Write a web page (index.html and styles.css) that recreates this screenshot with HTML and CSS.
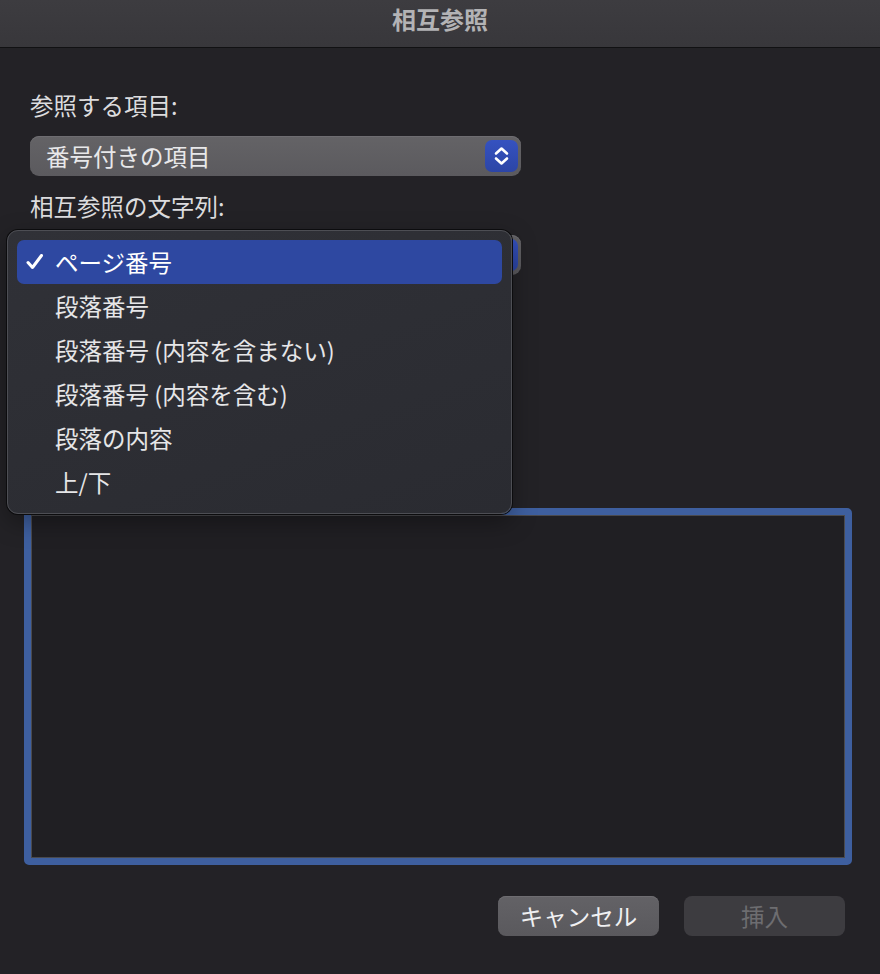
FILE: index.html
```html
<!DOCTYPE html>
<html lang="ja">
<head>
    <meta charset="UTF-8">
    <meta name="viewport" content="width=device-width, initial-scale=1.0">
    <title>相互参照</title>
    <link rel="stylesheet" href="styles.css">
</head>
<body>
    <header class="titlebar">相互参照</header>
    <main class="dialog">
        <p class="label label-first">参照する項目:</p>
        <div class="popup">
            <span class="popup-text">番号付きの項目</span>
            <span class="stepper">
                <svg width="33" height="32" viewBox="0 0 33 32">
                    <path d="M11 13.5 L16.5 8.5 L22 13.5" fill="none" stroke="#fff" stroke-width="2.6" stroke-linecap="round" stroke-linejoin="round"/>
                    <path d="M11 18.5 L16.5 23.5 L22 18.5" fill="none" stroke="#fff" stroke-width="2.6" stroke-linecap="round" stroke-linejoin="round"/>
                </svg>
            </span>
        </div>
        <p class="label label-second">相互参照の文字列:</p>
        <!-- second popup, covered by its open menu -->
        <div class="popup popup-hidden">
            <span class="popup-text"></span>
            <span class="stepper"></span>
        </div>

        <div class="field"></div>

        <div class="buttons">
            <button class="btn btn-cancel">キャンセル</button>
            <button class="btn btn-insert" disabled>挿入</button>
        </div>

        <ul class="menu">
            <li class="menu-item selected">
                <span class="check">
                    <svg width="18" height="16" viewBox="0 0 18 16">
                        <path d="M2 8.5 L6.5 13.5 L15.5 1.5" fill="none" stroke="#fff" stroke-width="3" stroke-linecap="round" stroke-linejoin="round"/>
                    </svg>
                </span>
                <span>ページ番号</span>
            </li>
            <li class="menu-item"><span>段落番号</span></li>
            <li class="menu-item"><span>段落番号&nbsp;(内容を含まない)</span></li>
            <li class="menu-item"><span>段落番号&nbsp;(内容を含む)</span></li>
            <li class="menu-item"><span>段落の内容</span></li>
            <li class="menu-item"><span>上/下</span></li>
        </ul>
    </main>
</body>
</html>
```

FILE: styles.css
```css
* {
    margin: 0;
    padding: 0;
    box-sizing: border-box;
    font-family: "Noto Sans CJK JP", "Noto Sans", sans-serif;
}

body {
    background-color: #232226;
    color: #dedede;
    width: 880px;
    height: 974px;
    overflow: hidden;
}

.titlebar {
    height: 48px;
    background: linear-gradient(#3d3c40, #38373b);
    border-bottom: 1px solid #111113;
    text-align: center;
    font-size: 24px;
    font-weight: bold;
    line-height: 38px;
    color: #b3b3b5;
}

.dialog {
    position: relative;
    padding: 0 35px 0 30px;
    display: flex;
    flex-direction: column;
}

.label {
    font-size: 23.5px;
    line-height: 28px;
    color: #dcdcde;
}

.label-first {
    margin-top: 43px;
}

.label-second {
    margin-top: 16px;
}

.popup {
    width: 491px;
    height: 40px;
    margin-top: 17px;
    background: linear-gradient(#646366, #5b5a5e);
    border-radius: 9px;
    box-shadow: inset 0 1px 0 #6e6d71;
    display: flex;
    align-items: center;
    justify-content: space-between;
    padding: 0 3px 0 16px;
}

.popup-hidden {
    margin-top: 15px;
}

.popup-text {
    font-size: 23.5px;
    color: #e8e8ea;
}

.stepper {
    width: 33px;
    height: 32px;
    background: linear-gradient(#3552c0, #2c45a6);
    border-radius: 7px;
    display: flex;
}

.field {
    margin: 233px 0 0 -6px;
    width: 828px;
    height: 357px;
    border: 7px solid #3e5f9f;
    border-radius: 5px;
    background-color: #201f23;
    box-shadow: inset 0 0 0 1px #4a4a4e;
}

.buttons {
    margin-top: 31px;
    display: flex;
    justify-content: flex-end;
    gap: 25px;
}

.btn {
    width: 161px;
    height: 40px;
    border: none;
    border-radius: 8px;
    font-size: 23.5px;
    font-family: "Noto Sans CJK JP", sans-serif;
}

.btn-cancel {
    background: linear-gradient(#636266, #5a595d);
    color: #f0f0f2;
    box-shadow: inset 0 1px 0 #6e6d71;
}

.btn-insert {
    background-color: #3d3c40;
    color: #6d6d70;
}

.menu {
    position: absolute;
    left: 7px;
    top: 182px;
    width: 505px;
    height: 284px;
    list-style: none;
    padding: 9px 9px;
    background: linear-gradient(160deg, #303137, #2a2b31);
    border: 1px solid #4d4e54;
    border-radius: 11px;
    box-shadow: 0 0 0 1px #0c0c0e, 0 8px 24px rgba(0, 0, 0, 0.35);
}

.menu-item {
    height: 44px;
    display: flex;
    align-items: center;
    padding-left: 38px;
    font-size: 23.5px;
    color: #e6e6e8;
    border-radius: 7px;
}

.menu-item.selected {
    background-color: #2e48a1;
    color: #ffffff;
    padding-left: 9px;
}

.check {
    width: 29px;
    display: flex;
    align-items: center;
}
```
